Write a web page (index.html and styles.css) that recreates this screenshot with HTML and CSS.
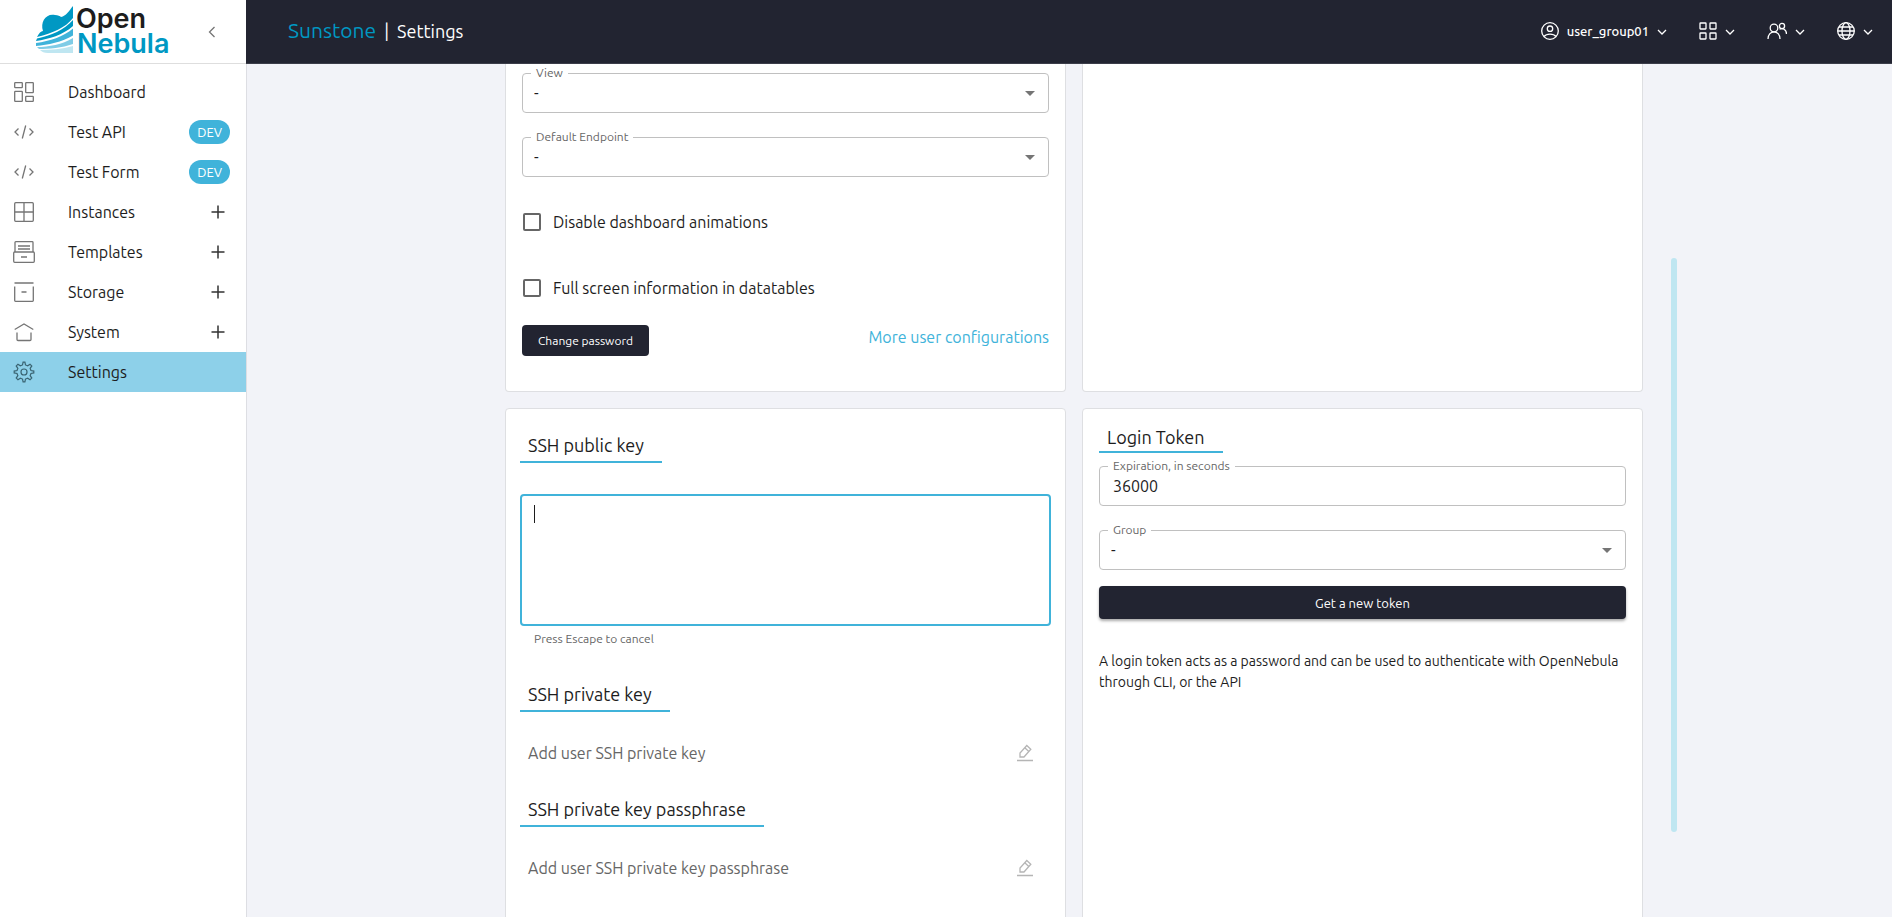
FILE: index.html
```html
<!DOCTYPE html>
<html lang="en">
<head>
<meta charset="utf-8">
<title>Sunstone | Settings</title>
<link rel="stylesheet" href="styles.css">
</head>
<body>
<svg class="defs" aria-hidden="true">
  <symbol id="chevron" viewBox="0 0 10 10"><path d="M1 3l4 4 4-4"/></symbol>
  <symbol id="code" viewBox="0 0 20 20"><path d="M4.500 6.500L1 10l3.500 3.500M15.500 6.500L19 10l-3.500 3.500M11.700 3.500L8.300 16.500"/></symbol>
  <symbol id="plus" viewBox="0 0 14 14"><path d="M7 .5v13M.5 7h13"/></symbol>
  <symbol id="pencil" viewBox="0 0 16 18"><path d="M0 16.500h16M3 13V9l6.800-7.500 4 3.700L7 13zM7.800 3.700l4 3.700"/></symbol>
  <symbol id="caret-down" viewBox="0 0 10 5"><path d="M0 0h10L5 5z"/></symbol>
</svg>
<div class="app">
  <aside class="sidebar">
    <div class="brand">
      <svg class="logo" viewBox="0 0 136 50" role="img" aria-label="OpenNebula">
        <g>
          <path fill="#0098c3" d="M38 2v12C30 24 18 29 2 33c2-4 4-6 6-6-3-9 3-18 12-16 3 0 5 1 6 2C31 12 34 7 38 2z"/>
          <path fill="#0098c3" d="M38 16v6C28 31 14 35 1 37l1-2.500c14-3 27-8.500 36-18.500z"/>
          <path fill="#40b3da" d="M38 24.500v7C27 38 13 41 1 42v-3c14-2 27-6 37-14.500z"/>
          <path fill="#80cce6" d="M38 34v6c-11 4-24 5-34 5l-2-2c12 0 25-2.500 36-9z"/>
          <path fill="#bfe6f1" d="M38 42v7H13c-4 0-6-1-8-3 10 0 22-1 33-4z"/>
        </g>
        <text class="logo-text logo-dark" x="41" y="24">Open</text>
        <text class="logo-text logo-blue" x="42" y="49">Nebula</text>
      </svg>
      <button class="icon-button collapse" aria-label="Collapse menu"><svg class="line" width="8" height="12" viewBox="0 0 8 12"><path d="M6.500 1l-5 5 5 5"/></svg></button>
    </div>
    <nav class="menu">
      <a class="item" href="#"><svg class="line" viewBox="0 0 20 20"><rect x=".7" y=".7" width="7.600" height="5" rx=".6"/><rect x="11.700" y=".7" width="7.600" height="10" rx=".6"/><rect x=".7" y="9.300" width="7.600" height="10" rx=".6"/><rect x="11.700" y="14.300" width="7.600" height="5" rx=".6"/></svg><span>Dashboard</span></a>
      <a class="item" href="#"><svg class="line"><use href="#code"/></svg><span>Test API</span><b class="chip">DEV</b></a>
      <a class="item" href="#"><svg class="line"><use href="#code"/></svg><span>Test Form</span><b class="chip">DEV</b></a>
      <a class="item" href="#"><svg class="line" viewBox="0 0 20 20"><rect x=".7" y=".7" width="18.600" height="18.600" rx="1"/><path d="M10 .7v18.600M.7 10h18.600"/></svg><span>Instances</span><svg class="line plus"><use href="#plus"/></svg></a>
      <a class="item" href="#"><svg class="line wide" viewBox="0 0 22 22"><path d="M2 11V1.500q0-.8.8-.8h16.400q.8 0 .8.800V11M5 5h12M5 8h12M8 16h6"/><rect x=".7" y="11" width="20.600" height="10.300" rx="1"/></svg><span>Templates</span><svg class="line plus"><use href="#plus"/></svg></a>
      <a class="item" href="#"><svg class="line" viewBox="0 0 20 20"><path d="M.7 4.500v14q0 .8.8.8h17q.8 0 .8-.8v-14M.5 1h19M7.500 10h5"/></svg><span>Storage</span><svg class="line plus"><use href="#plus"/></svg></a>
      <a class="item" href="#"><svg class="line" viewBox="0 0 20 20"><path d="M.7 7.500L10 2l9.300 5.500M3 10.500v7q0 1 1 1h12q1 0 1-1v-7"/></svg><span>System</span><svg class="line plus"><use href="#plus"/></svg></a>
      <a class="item active" href="#" aria-current="page"><svg class="line wide" viewBox="0 0 24 24"><circle cx="12" cy="12" r="3.300"/><path d="M19.600 10.400L18.700 8l1.800-2.600-1.900-1.900L16 5.300l-2.400-1-.6-3.100h-2l-.6 3.100-2.400 1-2.600-1.800-1.900 1.900L5.300 8l-.9 2.400-3.100.6v2l3.100.6.9 2.400-1.800 2.600 1.900 1.900L8 18.700l2.400 1 .6 3.100h2l.6-3.100 2.400-1 2.600 1.800 1.900-1.900-1.800-2.600.9-2.400 3.100-.6v-2z"/></svg><span>Settings</span></a>
    </nav>
  </aside>
  <div class="page">
    <header class="topbar">
      <h1 class="title"><span class="product">Sunstone</span><span class="section">|</span><span class="section">Settings</span></h1>
      <div class="tools">
        <button class="tool"><svg class="line" width="18" height="18" viewBox="1 1 18 18"><circle cx="10" cy="10" r="8.300"/><circle cx="10" cy="7.700" r="2.700"/><path d="M4 15.500c2.500-3.300 9.500-3.300 12 0"/></svg><span>user_group01</span><svg class="line chev"><use href="#chevron"/></svg></button>
        <button class="tool" aria-label="Views"><svg class="line" width="18" height="18" viewBox="0 0 18 18"><rect x="1" y="1" width="6" height="6" rx=".5"/><rect x="11" y="1" width="6" height="6" rx=".5"/><rect x="1" y="11" width="6" height="6" rx=".5"/><rect x="11" y="11" width="6" height="6" rx=".5"/></svg><svg class="line chev"><use href="#chevron"/></svg></button>
        <button class="tool" aria-label="Groups"><svg class="line" width="20" height="18" viewBox="0 0 20 18"><circle cx="7" cy="6" r="3.800"/><path d="M1 17c0-9.500 12-9.500 12 0"/><circle cx="15" cy="4" r="2.600"/><path d="M12.500 7.300c3-1.800 7 0 7 4.700"/></svg><svg class="line chev"><use href="#chevron"/></svg></button>
        <button class="tool" aria-label="Zone"><svg class="line" width="18" height="18" viewBox="1 1 18 18"><circle cx="10" cy="10" r="8.300"/><ellipse cx="10" cy="10" rx="4" ry="8.300"/><path d="M1.700 10h16.600M2.900 6h14.200M2.900 14h14.200"/></svg><svg class="line chev"><use href="#chevron"/></svg></button>
      </div>
    </header>
    <main class="content">
      <div class="scroller">
        <div class="cards">
          <section class="card card-cut">
            <div class="field">
              <label for="view">View</label>
              <select id="view"><option>-</option></select>
              <svg class="arrow"><use href="#caret-down"/></svg>
            </div>
            <div class="field">
              <label for="endpoint">Default Endpoint</label>
              <select id="endpoint"><option>-</option></select>
              <svg class="arrow"><use href="#caret-down"/></svg>
            </div>
            <label class="check"><input type="checkbox"><span>Disable dashboard animations</span></label>
            <label class="check"><input type="checkbox"><span>Full screen information in datatables</span></label>
            <div class="actions">
              <button class="button">Change password</button>
              <a class="link" href="#">More user configurations</a>
            </div>
          </section>
          <section class="card card-cut"></section>
          <section class="card keys">
            <h2 class="heading"><label for="pubkey">SSH public key</label></h2>
            <div class="editor">
              <textarea id="pubkey" class="editing" aria-describedby="pubkey-help"></textarea>
              <span class="cursor"></span>
            </div>
            <p class="help" id="pubkey-help">Press Escape to cancel</p>
            <h2 class="heading">SSH private key</h2>
            <div class="entry"><span>Add user SSH private key</span><button class="icon-button" aria-label="Edit private key"><svg class="line edit"><use href="#pencil"/></svg></button></div>
            <h2 class="heading">SSH private key passphrase</h2>
            <div class="entry"><span>Add user SSH private key passphrase</span><button class="icon-button" aria-label="Edit passphrase"><svg class="line edit"><use href="#pencil"/></svg></button></div>
          </section>
          <section class="card token">
            <h2 class="heading">Login Token</h2>
            <div class="field">
              <label for="expiration">Expiration, in seconds</label>
              <input id="expiration" type="text" value="36000">
            </div>
            <div class="field">
              <label for="group">Group</label>
              <select id="group"><option>-</option></select>
              <svg class="arrow"><use href="#caret-down"/></svg>
            </div>
            <button class="button raised">Get a new token</button>
            <p class="note">A login token acts as a password and can be used to authenticate with OpenNebula through CLI, or the API</p>
          </section>
        </div>
        <div class="track"><div class="thumb"></div></div>
      </div>
    </main>
  </div>
</div>
</body>
</html>
```
FILE: styles.css
```css
* { box-sizing: border-box; }
body { margin: 0; font: 16px/24px "Ubuntu", "Noto Sans", sans-serif; color: #1d1d1d; }
button, input, select, textarea { font: inherit; color: inherit; }
button { cursor: pointer; }
h1, h2, p { margin: 0; font-weight: 400; }
a { color: inherit; text-decoration: none; }
.defs { display: none; }
.line { fill: none; stroke: currentColor; stroke-width: 1.3; flex: none; }
.icon-button { display: flex; border: 0; background: none; padding: 0; color: inherit; }

.app { display: flex; height: 100vh; overflow: hidden; background: #f2f3f8; }
.sidebar { flex: none; width: 246px; background: #fff; box-shadow: 1px 0 #dddee3; z-index: 1; }
.brand { display: flex; align-items: center; justify-content: space-between; height: 64px; padding: 0 30px 0 35px; border-bottom: 1px solid #dedede; }
.logo { width: 136px; height: 50px; margin-bottom: 6px; overflow: visible; }
.logo-text { font: 600 27px Inter, sans-serif; }
.logo-dark { fill: #1d1d1d; }
.logo-blue { fill: #0098c3; }
.collapse { color: #757575; }
.menu { display: flex; flex-direction: column; padding: 8px 0; }
.item { display: flex; align-items: center; height: 40px; padding: 0 16px 0 14px; }
.item > svg:first-child { width: 20px; height: 20px; margin-right: 34px; color: #757575; }
.item > svg.wide:first-child { width: 22px; height: 22px; margin: 0 33px 0 -1px; }
.item span { flex: 1; }
.item svg.plus { width: 14px; height: 14px; margin-right: 5px; color: #333; stroke-width: 1.5; }
.chip { padding: 0 8px; border-radius: 12px; background: #40b3da; color: #fff; font-size: 13px; font-weight: 400; }
.active { background: #8dd0e9; }
.item.active > svg:first-child { color: #3a6472; }

.page { flex: 1; min-width: 0; display: flex; flex-direction: column; }
.topbar { position: relative; z-index: 2; flex: none; display: flex; align-items: center; justify-content: space-between; height: 64px; padding: 0 19px 2px 42px; background: #222431; border-bottom: 1px solid #3b3d49; color: #fff; }
.title { display: flex; align-items: baseline; gap: 8px; }
.product { font-size: 21px; color: #0098c3; }
.section { font-size: 18px; }
.tools { display: flex; align-items: center; gap: 32px; }
.tool { display: flex; align-items: center; gap: 8px; border: 0; padding: 0; background: none; font-size: 13px; font-weight: 500; }
.chev { width: 10px; height: 10px; margin-top: 3px; }

.content { flex: 1; min-height: 0; display: flex; justify-content: center; padding: 0 24px; }
.scroller { display: flex; flex: 1; max-width: 1216px; }
.cards { flex: 1; display: grid; grid-template-columns: 1fr 1fr; grid-template-rows: 328px auto; gap: 16px; padding-left: 44px; }
.card { min-width: 0; background: #fff; border: 1px solid #dedfe2; border-radius: 4px; padding: 16px; }
.card-cut { border-top: 0; border-radius: 0 0 4px 4px; padding-top: 9px; }
.track { flex: none; width: 34px; padding-top: 194px; display: flex; justify-content: flex-end; align-items: flex-start; }
.thumb { width: 6px; height: 574px; border-radius: 3px; background: #bfe6f1; }

.field { position: relative; margin-bottom: 24px; }
.field label { position: absolute; left: 9px; top: -8px; padding: 0 5px; background: #fff; font-size: 12px; line-height: 16px; color: #666; }
.field input, .field select { display: block; width: 100%; height: 40px; padding: 0 13px; border: 1px solid #c0c0c0; border-radius: 4px; background: none; appearance: none; }
.field select { padding-left: 11px; }
.arrow { position: absolute; right: 14px; top: 18px; width: 10px; height: 5px; fill: #757575; pointer-events: none; }
.check { display: flex; align-items: center; gap: 12px; height: 42px; margin-bottom: 24px; padding-left: 1px; }
.check input { appearance: none; width: 18px; height: 18px; margin: 0; border: 2px solid #666; border-radius: 2px; }
.actions { display: flex; justify-content: space-between; align-items: flex-start; margin-top: -8px; }
.link { color: #40b3da; font-size: 16px; }
.button { display: block; border: 0; border-radius: 4px; padding: 0 16px; height: 31px; background: #222431; color: #fff; font-size: 12px; }

.heading { width: fit-content; padding: 0 18px 2px 8px; border-bottom: 2px solid #40b3da; font-size: 18px; line-height: 28px; }
.keys { padding: 22px 14px; }
.editor { position: relative; margin-top: 31px; }
.editing { display: block; width: 100%; height: 132px; padding: 9px 12px; border: 2px solid #40b3da; border-radius: 4px; resize: none; outline: 0; }
.cursor { position: absolute; left: 14px; top: 11px; width: 1px; height: 18px; background: #1d1d1d; }
.help { margin: 4px 14px 32px; font-size: 12px; line-height: 18px; color: #666; }
.entry { display: flex; align-items: center; justify-content: space-between; height: 24px; margin: 29px 18px 30px 8px; color: #666; }
.edit { width: 16px; height: 18px; color: #b5b5b5; }
.token { padding-top: 14px; }
.token .heading { margin-bottom: 13px; padding-bottom: 0; }
.raised { width: 100%; height: 33px; margin-top: -8px; box-shadow: 0 2px 3px #0005; font-size: 13px; }
.note { margin-top: 32px; font-size: 14px; line-height: 21px; }
```
